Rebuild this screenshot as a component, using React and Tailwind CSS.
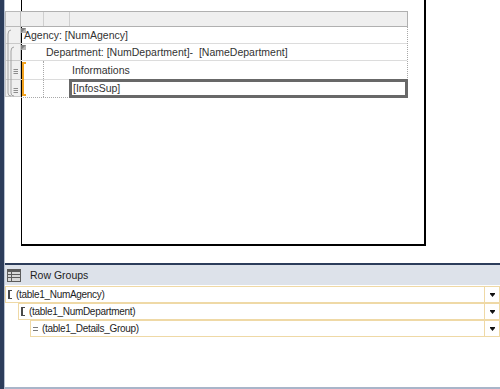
import clsx from 'clsx'

const font = { fontFamily: '"Liberation Sans", Arial, sans-serif' }

const groups = [
  { name: '(table1_NumAgency)', indent: 'ml-0', icon: 'bracket' },
  { name: '(table1_NumDepartment)', indent: 'ml-[13px]', icon: 'bracket' },
  { name: '(table1_Details_Group)', indent: 'ml-[25px]', icon: 'detail' },
]

function CornerMark() {
  return (
    <svg width="5" height="5" className="absolute left-0 top-px">
      <rect x="0" y="0" width="5" height="5" fill="#b4b4b4" />
      <polygon points="0,0 5,0 0,5" fill="#7e7e7e" />
    </svg>
  )
}

function HandleColumn() {
  return (
    <div className="relative w-[16px] shrink-0">
      <div className="h-[16px] bg-[#efefef] border border-[#b9b9b9]" />
      {[17, 17, 19, 17].map((h, i) => (
        <div
          key={i}
          className={clsx(
            'bg-[#f0f0f0] border-x border-b border-[#c9c9c9]',
            h === 19 ? 'h-[19px]' : 'h-[17px]',
          )}
        />
      ))}
      {/* group brackets drawn over the handles */}
      <svg width="16" height="70" className="absolute left-0 top-[16px]">
        <path d="M6 3 Q3 3 3 7 L3 66 Q3 69 6 69" fill="none" stroke="#a2a2a2" />
        <path d="M9 20 Q6 20 6 24 L6 66 Q6 69 9 69" fill="none" stroke="#a2a2a2" />
        <path d="M8.5 42.5 H13 M8.5 44.5 H13 M8.5 46.5 H13" stroke="#8c8c8c" />
        <path d="M8.5 61.5 H13 M8.5 63.5 H13 M8.5 65.5 H13" stroke="#8c8c8c" />
      </svg>
    </div>
  )
}

function DesignTable() {
  return (
    <div className="-ml-[17px] flex text-[10.5px] text-[#333]">
      <HandleColumn />
      <div className="flex flex-col w-[387px]">
        {/* column headers */}
        <div className="flex h-[16px] bg-[#efefef] border-y border-r border-[#b0b0b0]">
          <div className="w-[23px] border-r border-[#cfcfcf]" />
          <div className="w-[26px] border-r border-[#cfcfcf]" />
          <div className="flex-1" />
        </div>

        <div className="border-r border-b border-dotted border-[#a8a8a8]">
          {/* Agency row */}
          <div className="relative h-[17px] flex items-center pl-[3px] pt-[2px] border-b border-[#dcdcdc]">
            <CornerMark />
            <span>Agency: [NumAgency]</span>
          </div>

          {/* Department row */}
          <div className="flex h-[17px] border-b border-[#dcdcdc]">
            <div className="relative w-[23px]">
              <CornerMark />
            </div>
            <div className="flex-1 flex items-center pl-[2px] pt-[2px] whitespace-pre">
              Department: [NumDepartment]-  [NameDepartment]
            </div>
          </div>

          {/* Informations row */}
          <div className="flex h-[19px] border-b border-[#dcdcdc]">
            <div className="w-[23px] border-r border-dotted border-[#a8a8a8] pl-px pt-px">
              <div className="w-[4px] h-[18px] border-l-2 border-t-2 border-[#f2a21e]" />
            </div>
            <div className="w-[26px]" />
            <div className="flex-1 flex items-center pl-[2px] pt-px">Informations</div>
          </div>

          {/* InfosSup row */}
          <div className="flex h-[17px]">
            <div className="w-[23px] border-r border-dotted border-[#a8a8a8] pl-px">
              <div className="w-[4px] h-[16px] border-l-2 border-b-2 border-[#f2a21e]" />
            </div>
            <div className="w-[26px]" />
            <div className="flex-1 flex items-center pl-[3px] pt-px outline-3 outline-[#686868] -outline-offset-2">
              [InfosSup]
            </div>
          </div>
        </div>
      </div>
    </div>
  )
}

function GroupIcon({ kind }) {
  if (kind === 'detail') {
    return (
      <svg width="5" height="6" className="shrink-0">
        <path d="M0 1.5 H5 M0 4.5 H5" stroke="#7a7a7a" />
      </svg>
    )
  }
  return (
    <svg width="4" height="9" className="shrink-0">
      <rect x="0" y="0" width="2" height="9" fill="#4a4a4a" />
      <rect x="0" y="0" width="4" height="1" fill="#4a4a4a" />
      <rect x="0" y="8" width="4" height="1" fill="#4a4a4a" />
    </svg>
  )
}

function RowGroupsPanel() {
  return (
    <div className="flex-1 flex flex-col">
      <div className="h-[2px] bg-[#2c3d5b]" />
      <div className="h-[20px] bg-[#dde2ea] flex items-center pl-[2px] gap-[9px]">
        <svg width="14" height="13">
          <rect x="0" y="0" width="14" height="13" fill="#5c5c5c" />
          <rect x="1" y="3" width="12" height="2" fill="#d8d8d8" />
          <rect x="1" y="6" width="12" height="2" fill="#d8d8d8" />
          <rect x="1" y="9" width="12" height="3" fill="#d8d8d8" />
          <rect x="4" y="3" width="1" height="9" fill="#5c5c5c" />
        </svg>
        <span className="text-[10.5px] text-[#1e1e1e] pt-px">Row Groups</span>
      </div>

      <div className="mt-px flex flex-col">
        {groups.map(g => (
          <div
            key={g.name}
            className={clsx(
              'h-[17px] flex items-center bg-white border border-[#efd9a6]',
              g.indent,
            )}
          >
            <div className="flex-1 flex items-center gap-[4px] pl-[2px] text-[10px] tracking-[-0.3px] text-[#1e1e1e]">
              <GroupIcon kind={g.icon} />
              <span>{g.name}</span>
            </div>
            <div className="w-[15px] h-full flex items-center justify-center border-l border-[#efd9a6]">
              <svg width="5" height="4">
                <rect x="0" y="0" width="5" height="1" fill="#111" />
                <polygon points="0,1 5,1 2.5,4" fill="#111" />
              </svg>
            </div>
          </div>
        ))}
      </div>

      <div className="flex-1" />
      <div className="h-[2px] bg-[#a9b5c9]" />
    </div>
  )
}

export default function App() {
  return (
    <div className="flex w-[500px] h-[389px] bg-white overflow-hidden" style={font}>
      <div className="w-[4px] bg-[#2c3d5b]" />
      <div className="w-px bg-[#b6c0d0]" />
      <div className="flex-1 flex flex-col">
        <div className="h-[263px] shrink-0">
          <div className="ml-[16px] w-[405px] h-[246px] border-l border-r-2 border-b-2 border-black pt-[11px]">
            <DesignTable />
          </div>
        </div>
        <RowGroupsPanel />
      </div>
    </div>
  )
}
